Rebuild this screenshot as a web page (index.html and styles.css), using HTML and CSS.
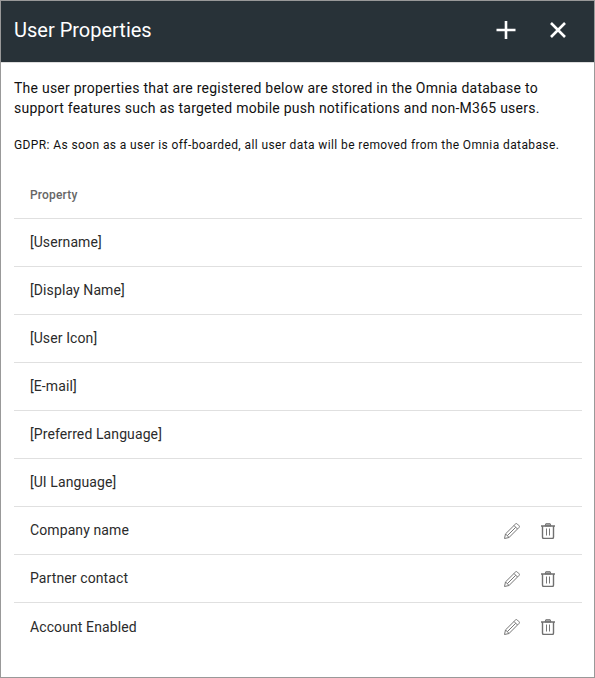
FILE: index.html
```html
<!DOCTYPE html>
<html lang="en">
<head>
<meta charset="utf-8">
<title>User Properties</title>
<link rel="stylesheet" href="styles.css">
</head>
<body>
<svg class="defs" width="0" height="0" aria-hidden="true">
  <symbol id="pencil" viewBox="0 0 16 16"><path d="M.5 15.500l1-4.600L11.600.9q.8-.7 1.600 0l1.900 1.900q.7.8 0 1.600L5 14.500zM1.500 10.900l3.600 3.600M10 2.500l3.500 3.500M3.300 12.700l8.400-8.400"/></symbol>
  <symbol id="trash" viewBox="0 0 14 16"><path class="lid" d="M4 3l.8-2.300h4.400L10 3z"/><path class="body" d="M0 3h14M1.500 3v10.900q0 1.500 1.200 1.500h8.600q1.200 0 1.200-1.500V3"/><path d="M5.500 5.500v7M8.500 5.500v7"/></symbol>
</svg>
<main class="panel">
  <header class="header">
    <h1 class="title">User Properties</h1>
    <button class="head-btn" aria-label="Add"><svg width="20" height="20" viewBox="0 0 20 20"><path d="M10 1v18M.5 10h19"/></svg></button>
    <button class="head-btn" aria-label="Close"><svg width="20" height="20" viewBox="0 0 20 20"><path d="M3 3l14 14M17 3L3 17"/></svg></button>
  </header>
  <section class="content">
    <p class="intro">The user properties that are registered below are stored in the Omnia database to<br>support features such as targeted mobile push notifications and non-M365 users.</p>
    <p class="gdpr">GDPR: As soon as a user is off-boarded, all user data will be removed from the Omnia database.</p>
    <div class="table">
      <div class="row head">Property</div>
      <div class="row"><span class="name">[Username]</span></div>
      <div class="row"><span class="name">[Display Name]</span></div>
      <div class="row"><span class="name">[User Icon]</span></div>
      <div class="row"><span class="name">[E-mail]</span></div>
      <div class="row"><span class="name">[Preferred Language]</span></div>
      <div class="row"><span class="name">[UI Language]</span></div>
      <div class="row"><span class="name">Company name</span><span class="actions"><svg class="pencil"><use href="#pencil"/></svg><svg class="trash"><use href="#trash"/></svg></span></div>
      <div class="row"><span class="name">Partner contact</span><span class="actions"><svg class="pencil"><use href="#pencil"/></svg><svg class="trash"><use href="#trash"/></svg></span></div>
      <div class="row"><span class="name">Account Enabled</span><span class="actions"><svg class="pencil"><use href="#pencil"/></svg><svg class="trash"><use href="#trash"/></svg></span></div>
    </div>
  </section>
</main>
</body>
</html>
```
FILE: styles.css
```css
* { box-sizing: border-box; }
body { margin: 0; font-family: Roboto, sans-serif; color: #111; }
.defs { display: block; }
.panel { height: 678px; border: 1px solid #999; background: #fff; overflow: hidden; }
.header { display: flex; align-items: center; height: 62px; padding: 0 16px 4px 13px; border-bottom: 1px solid #ddd; background: #283238; color: #fff; }
.title { flex: 1; margin: 0; font-size: 20px; font-weight: 400; line-height: 32px; }
.head-btn { display: grid; place-items: center; width: 40px; height: 40px; margin-left: 12px; padding: 0; border: 0; background: none; }
.head-btn svg { fill: none; stroke: #fff; stroke-width: 2.6; }
.content { padding: 15px 12px 0 13px; }
.intro { margin: 0; font-size: 14px; line-height: 20px; letter-spacing: .245px; }
.gdpr { margin: 17px 0 0; font-size: 12px; line-height: 20px; letter-spacing: .395px; }
.table { margin-top: 16px; }
.row { display: flex; justify-content: space-between; align-items: center; height: 48px; padding: 0 27px 0 16px; border-bottom: 1px solid #e0e0e0; font-size: 14px; letter-spacing: .1px; color: #2b2b2b; }
.row:last-child { border-bottom: 0; }
.name { padding-bottom: 2px; }
.row:last-child .name { padding-bottom: 0; }
.head { color: #666; font-size: 12px; font-weight: 500; letter-spacing: .17px; }
.actions { display: flex; align-items: center; gap: 21px; }
.actions svg { fill: none; stroke: #777; stroke-width: 1; }
.pencil { width: 16px; height: 16px; }
.trash { width: 14px; height: 16px; }
.lid { fill: #aaa; }
.body { stroke: #707070; stroke-width: 1.4; }
```
